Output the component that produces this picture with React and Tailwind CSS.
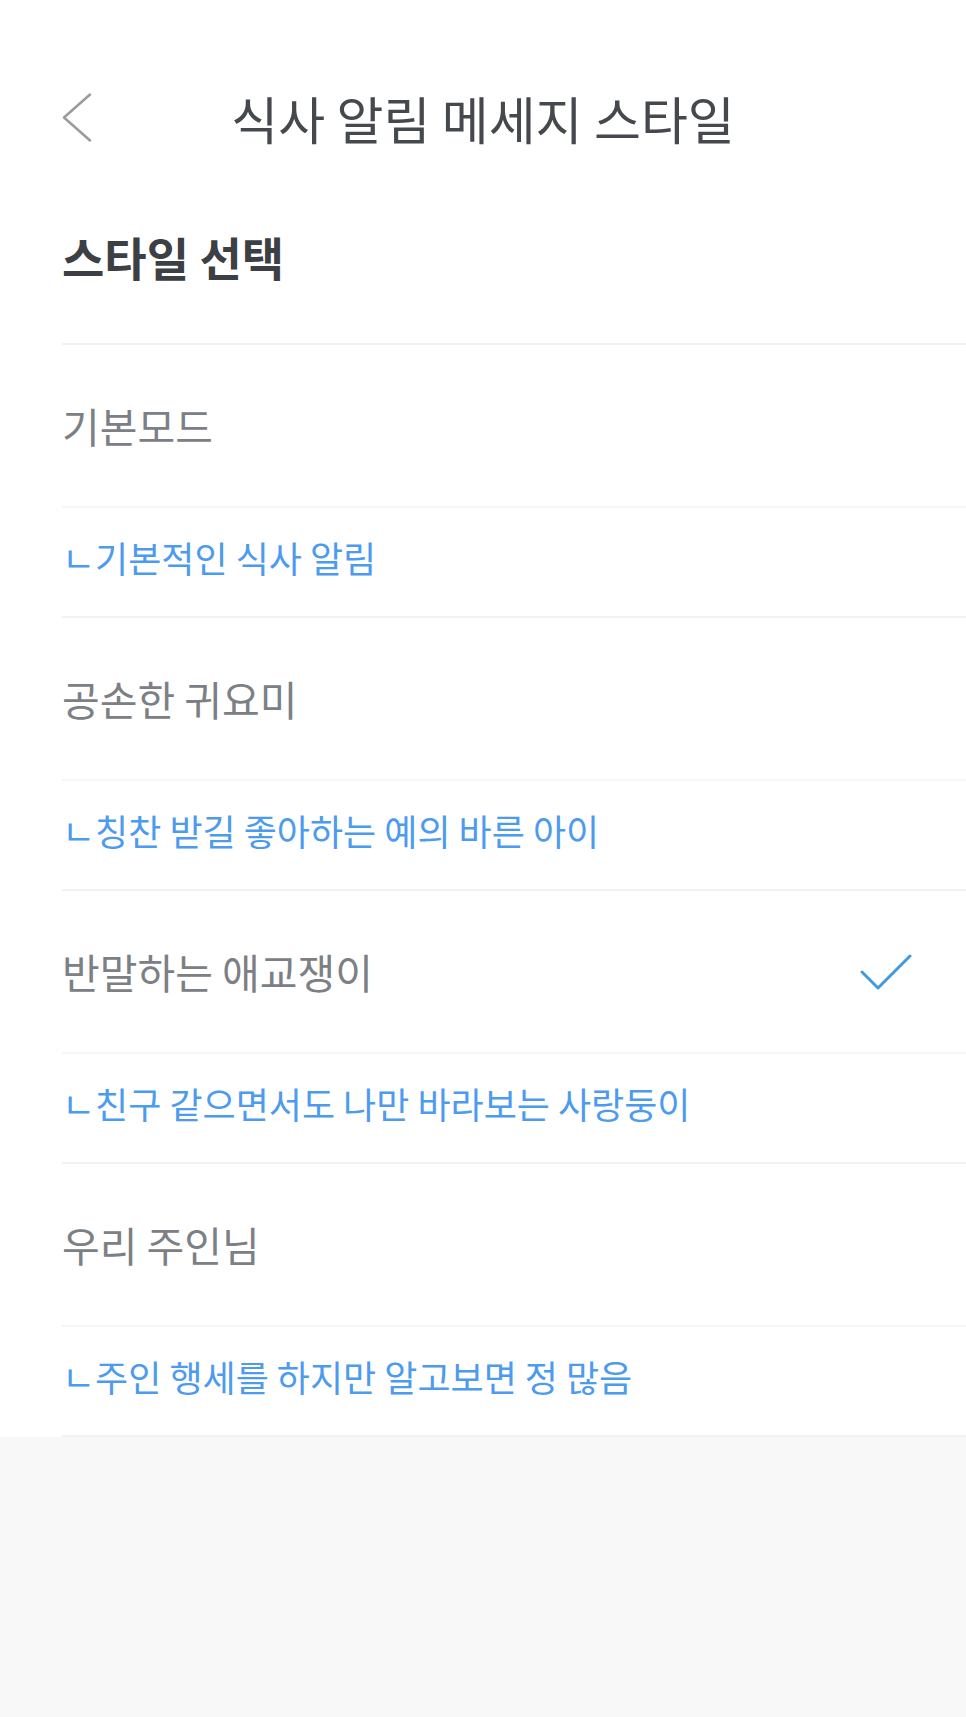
import { useState } from 'react';

const styles = [
  { name: '기본모드', desc: 'ㄴ기본적인 식사 알림' },
  { name: '공손한 귀요미', desc: 'ㄴ칭찬 받길 좋아하는 예의 바른 아이' },
  { name: '반말하는 애교쟁이', desc: 'ㄴ친구 같으면서도 나만 바라보는 사랑둥이' },
  { name: '우리 주인님', desc: 'ㄴ주인 행세를 하지만 알고보면 정 많음' },
];

const font = { fontFamily: '"Noto Sans CJK KR", "Noto Sans", sans-serif' };

export default function App() {
  const [selected, setSelected] = useState(2);

  return (
    <div className="min-h-screen bg-[#f8f8f8]" style={font}>
      <div className="bg-white pt-[93px]">
        {/* Header */}
        <div className="grid grid-cols-[40px_1fr_40px] items-center h-[50px] px-[62px]">
          <button className="flex items-center h-[50px]">
            <svg width="30" height="50" viewBox="0 0 30 50" fill="none">
              <path d="M28 1.5 L2 24.5 L28 47.5" stroke="#9b9b9b" strokeWidth="2.5" strokeLinecap="round" strokeLinejoin="round" />
            </svg>
          </button>
          <h1 className="text-center text-[51px] leading-[50px] text-[#45484c] whitespace-nowrap">
            식사 알림 메세지 스타일
          </h1>
          <div />
        </div>

        {/* Section title */}
        <h2 className="mt-[88px] ml-[62px] h-[50px] text-[46px] leading-[50px] font-bold text-[#3c4045]">
          스타일 선택
        </h2>

        {/* Style list */}
        <div className="mt-[62px] ml-[62px] border-b-2 border-[#f1f2f4]">
          {styles.map((s, i) => (
            <div key={s.name}>
              <div
                onClick={() => setSelected(i)}
                className="h-[163px] border-t-2 border-[#f1f2f4] flex items-center justify-between pr-[54px] cursor-pointer"
              >
                <span className="text-[41px] leading-none text-[#7c8085]">{s.name}</span>
                {selected === i && (
                  <svg width="52" height="38" viewBox="0 0 52 38" fill="none">
                    <path d="M2 19 L18 35 L50 3" stroke="#3f9be0" strokeWidth="3" strokeLinecap="round" strokeLinejoin="round" />
                  </svg>
                )}
              </div>
              <div className="h-[110px] border-t-2 border-[#f6f6f6] flex items-center pb-[10px]">
                <span className="text-[36px] leading-none text-[#4d9bef]">{s.desc}</span>
              </div>
            </div>
          ))}
        </div>
      </div>
    </div>
  );
}
